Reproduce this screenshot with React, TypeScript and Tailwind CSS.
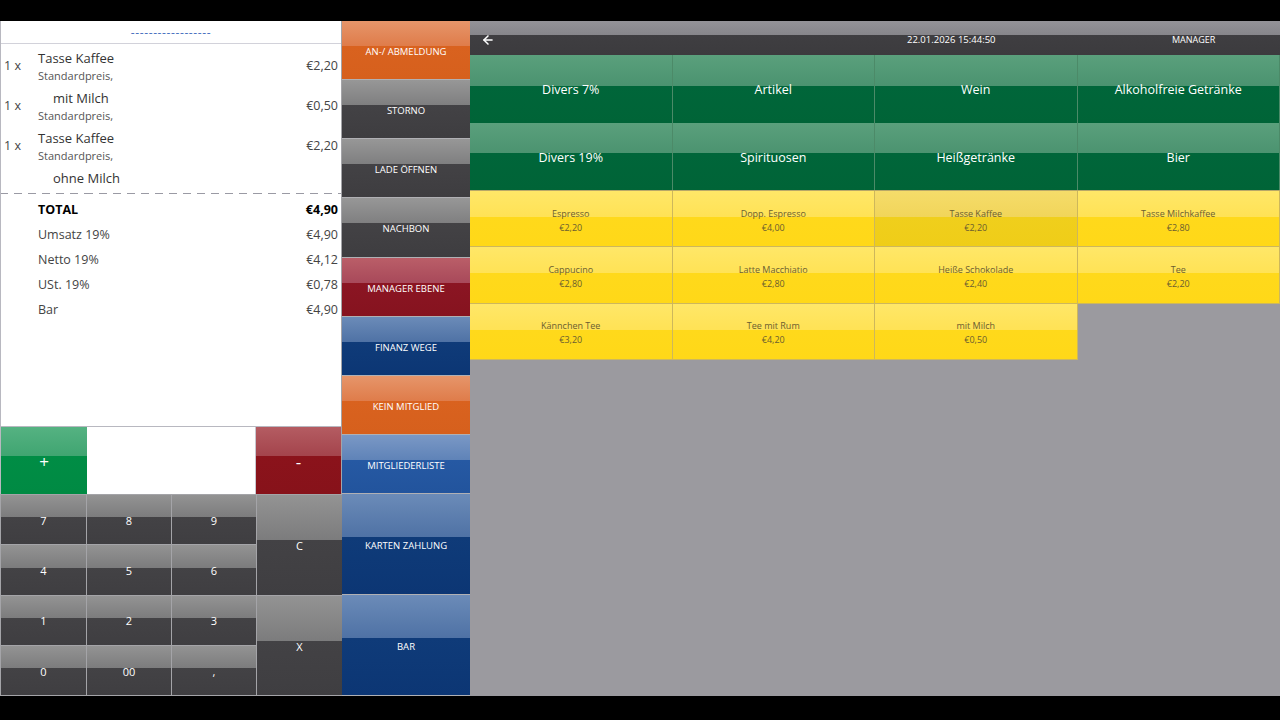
import { ArrowLeft } from 'lucide-react';

// two-tone button faces: light upper band, dark lower band
const face = {
  orange: 'bg-[linear-gradient(to_bottom,#e6956a_0%,#df7c4a_43%,#d9621f_43%,#d6601d_100%)]',
  gray: 'bg-[linear-gradient(to_bottom,#979797_0%,#7f7f80_43%,#434245_43%,#3e3d40_100%)]',
  red: 'bg-[linear-gradient(to_bottom,#ba5e68_0%,#a8495a_43%,#8b1523_43%,#86131f_100%)]',
  navy: 'bg-[linear-gradient(to_bottom,#6b8bb8_0%,#4f72a5_43%,#0f3b79_43%,#0c3674_100%)]',
  blue: 'bg-[linear-gradient(to_bottom,#7a98c5_0%,#5f83b8_43%,#2659a3_43%,#22549d_100%)]',
  plus: 'bg-[linear-gradient(to_bottom,#55b282_0%,#40a571_43%,#008d45_43%,#008a43_100%)]',
  minus: 'bg-[linear-gradient(to_bottom,#b45c62_0%,#a4444c_43%,#8b131b_43%,#87121a_100%)]',
  key: 'bg-[linear-gradient(to_bottom,#939393_0%,#7c7c7d_45%,#434245_45%,#3f3e41_100%)]',
};

const sideButtons = [
  { label: 'AN-/ ABMELDUNG', tone: face.orange, h: 'h-[59px]' },
  { label: 'STORNO', tone: face.gray, h: 'h-[59px]' },
  { label: 'LADE ÖFFNEN', tone: face.gray, h: 'h-[59px]' },
  { label: 'NACHBON', tone: face.gray, h: 'h-[60px]' },
  { label: 'MANAGER EBENE', tone: face.red, h: 'h-[59px]' },
  { label: 'FINANZ WEGE', tone: face.navy, h: 'h-[59px]' },
  { label: 'KEIN MITGLIED', tone: face.orange, h: 'h-[59px]' },
  { label: 'MITGLIEDERLISTE', tone: face.blue, h: 'h-[59px]' },
  { label: 'KARTEN ZAHLUNG', tone: face.navy, h: 'h-[101px]' },
  { label: 'BAR', tone: face.navy, h: 'h-[101px]' },
];

const categories = [
  'Divers 7%',
  'Artikel',
  'Wein',
  'Alkoholfreie Getränke',
  'Divers 19%',
  'Spirituosen',
  'Heißgetränke',
  'Bier',
];

const products = [
  { name: 'Espresso', price: '€2,20' },
  { name: 'Dopp. Espresso', price: '€4,00' },
  { name: 'Tasse Kaffee', price: '€2,20', active: true },
  { name: 'Tasse Milchkaffee', price: '€2,80' },
  { name: 'Cappucino', price: '€2,80' },
  { name: 'Latte Macchiatio', price: '€2,80' },
  { name: 'Heiße Schokolade', price: '€2,40' },
  { name: 'Tee', price: '€2,20' },
  { name: 'Kännchen Tee', price: '€3,20' },
  { name: 'Tee mit Rum', price: '€4,20' },
  { name: 'mit Milch', price: '€0,50' },
];

const totals = [
  { label: 'Umsatz 19%', value: '€4,90' },
  { label: 'Netto 19%', value: '€4,12' },
  { label: 'USt. 19%', value: '€0,78' },
  { label: 'Bar', value: '€4,90' },
];

function Receipt() {
  return (
    <div className="h-[405px] bg-white border-l border-[#b8b8c0] text-[#333] flex flex-col">
      <div className="h-[23px] flex items-center justify-center border-b border-[#d2d2da] shrink-0 pt-[2px]">
        <span className="text-[12px] leading-none text-[#4a72c0] tracking-[0.6px]">------------------</span>
      </div>

      <ItemRow qty="1 x" name="Tasse Kaffee" price="€2,20" />
      <ItemRow qty="1 x" name="mit Milch" price="€0,50" indent />
      <ItemRow qty="1 x" name="Tasse Kaffee" price="€2,20" />
      <div className="h-[26px] flex items-center pl-[52px] pt-[4px] text-[13px] text-[#333]">ohne Milch</div>

      <div className="mt-[3px] border-t border-dashed border-[#9a9aa4] [border-image:repeating-linear-gradient(to_right,#9a9aa4_0_8px,transparent_8px_14px)_1]" />

      <div className="pt-[4px]">
        <div className="h-[25px] flex items-center justify-between pl-[37px] pr-[3px] text-[12.5px] font-bold text-black">
          <span>TOTAL</span>
          <span>€4,90</span>
        </div>
        {totals.map((t) => (
          <div key={t.label} className="h-[25px] flex items-center justify-between pl-[37px] pr-[3px] text-[12.5px] text-[#444]">
            <span>{t.label}</span>
            <span>{t.value}</span>
          </div>
        ))}
      </div>
    </div>
  );
}

function ItemRow({ qty, name, price, indent }: { qty: string; name: string; price: string; indent?: boolean }) {
  return (
    <div className="h-[40px] flex items-center shrink-0 pt-[4px]">
      <span className="w-[37px] pl-[3px] text-[12.5px] text-[#444]">{qty}</span>
      <div className="flex-1 self-start pt-[2px] flex flex-col">
        <span className={`text-[13px] leading-[17px] text-[#333] ${indent ? 'pl-[15px]' : ''}`}>{name}</span>
        <span className="text-[11px] leading-[17px] text-[#555]">Standardpreis,</span>
      </div>
      <span className="pr-[3px] text-[12.5px] text-[#444]">{price}</span>
    </div>
  );
}

function Key({ label, tone, cls }: { label: string; tone: string; cls?: string }) {
  return (
    <div className={`${tone} ${cls ?? ''} flex items-center justify-center pt-[3px] text-white text-[11px] border-r border-b border-[#a4a4a8]`}>
      {label}
    </div>
  );
}

function Keypad() {
  return (
    <>
      <div className="h-[68px] flex border-l border-[#b8b8c0] border-t border-[#b8b8c0]">
        <div className={`${face.plus} w-[86px] flex items-center justify-center text-white text-[17px] pt-[2px]`}>+</div>
        <div className="flex-1 bg-white border-r border-[#c8c8d0]" />
        <div className={`${face.minus} w-[85px] flex items-center justify-center text-white text-[17px] pt-[2px]`}>-</div>
      </div>
      <div className="h-[202px] grid grid-cols-[86px_85px_85px_86px] grid-rows-4 border-l border-t border-[#a4a4a8]">
        <Key label="7" tone={face.key} />
        <Key label="8" tone={face.key} />
        <Key label="9" tone={face.key} />
        <Key label="C" tone={face.key} cls="row-span-2" />
        <Key label="4" tone={face.key} />
        <Key label="5" tone={face.key} />
        <Key label="6" tone={face.key} />
        <Key label="1" tone={face.key} />
        <Key label="2" tone={face.key} />
        <Key label="3" tone={face.key} />
        <Key label="X" tone={face.key} cls="row-span-2" />
        <Key label="0" tone={face.key} />
        <Key label="00" tone={face.key} />
        <Key label="," tone={face.key} />
      </div>
    </>
  );
}

function SideColumn() {
  return (
    <div className="w-[128px] flex flex-col">
      {sideButtons.map((b) => (
        <div
          key={b.label}
          className={`${b.tone} ${b.h} flex items-center justify-center pt-[4px] text-white text-[9.5px] border-b border-[#b0b0b4]`}
        >
          {b.label}
        </div>
      ))}
    </div>
  );
}

function TopBar() {
  return (
    <div className="h-[34px] flex items-center pt-[4px] bg-[linear-gradient(to_bottom,#949398_0%,#86858a_42%,#3f3e41_42%,#3c3b3e_100%)] text-white">
      <div className="w-[437px] pl-[11px] flex items-center">
        <ArrowLeft size={14} strokeWidth={2.6} />
      </div>
      <div className="w-[265px] text-[9.5px]">22.01.2026 15:44:50</div>
      <div className="text-[9px]">MANAGER</div>
    </div>
  );
}

function Categories() {
  return (
    <div className="h-[135px] grid grid-cols-4 grid-rows-2">
      {categories.map((c) => (
        <div
          key={c}
          className="bg-[linear-gradient(to_bottom,#5aa07c_0%,#4b9370_45%,#00663a_45%,#006437_100%)] border-r border-[#4c8a68] flex items-center justify-center pt-[4px] text-white text-[12.5px]"
        >
          {c}
        </div>
      ))}
    </div>
  );
}

function Products() {
  return (
    <div className="h-[170px] grid grid-cols-4 grid-rows-3 border-t border-[#b8a868]">
      {products.map((p) => (
        <div
          key={p.name}
          className={`${
            p.active
              ? 'bg-[linear-gradient(to_bottom,#f5dc6a_0%,#f1d55a_47%,#f0cf1c_47%,#efcd18_100%)]'
              : 'bg-[linear-gradient(to_bottom,#ffe768_0%,#ffe255_47%,#ffd91b_47%,#ffd818_100%)]'
          } border-r border-b border-[#cdb75c] flex flex-col items-center justify-center pt-[4px] text-[#6b5d30] text-[9px] leading-[14px]`}
        >
          <span>{p.name}</span>
          <span>{p.price}</span>
        </div>
      ))}
    </div>
  );
}

export default function App() {
  return (
    <div className="w-[1280px] h-[720px] bg-black pt-[21px] pb-[24px] font-['Open_Sans',sans-serif] overflow-hidden">
      <div className="h-[675px] flex">
        <div className="w-[342px] flex flex-col border-r border-[#a4a4a8]">
          <Receipt />
          <Keypad />
        </div>
        <SideColumn />
        <div className="flex-1 flex flex-col bg-[#9b9a9f]">
          <TopBar />
          <Categories />
          <Products />
        </div>
      </div>
    </div>
  );
}
